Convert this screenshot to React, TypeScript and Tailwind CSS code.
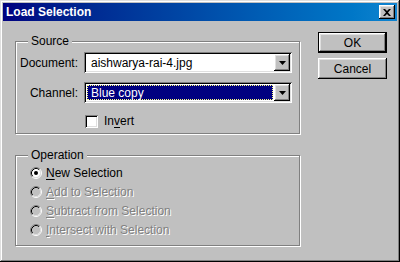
import React from 'react';

const font = { fontFamily: '"Liberation Sans", Arial, sans-serif' };

const raised =
  'shadow-[inset_-1px_-1px_0_#000,inset_1px_1px_0_#fff,inset_-2px_-2px_0_#808080,inset_2px_2px_0_#dfdfdf]';
const sunken =
  'shadow-[inset_1px_1px_0_#808080,inset_-1px_-1px_0_#fff,inset_2px_2px_0_#000,inset_-2px_-2px_0_#dfdfdf]';

const Arrow = () => (
  <svg width="7" height="4" viewBox="0 0 7 4">
    <path d="M0 0h7L3.5 4z" fill="#000" />
  </svg>
);

const Combo = ({ value, focused }: { value: string; focused?: boolean }) => (
  <div className={`w-[208px] h-[21px] bg-white flex items-stretch p-[2px] ${sunken}`}>
    <div className="flex-1 flex items-stretch p-[1px]">
      {focused ? (
        <div className="flex-1 bg-[#000080] text-white border border-dotted border-[#ffff80] flex items-center pl-[3px]">
          {value}
        </div>
      ) : (
        <div className="flex-1 flex items-center pl-[4px]">{value}</div>
      )}
    </div>
    <div className={`w-[16px] bg-[#c0c0c0] flex items-center justify-center ${raised}`}>
      <Arrow />
    </div>
  </div>
);

const Radio = ({ checked, disabled }: { checked?: boolean; disabled?: boolean }) => (
  <svg width="12" height="12" viewBox="0 0 12 12" className="shrink-0">
    <circle cx="6" cy="6" r="4.5" fill={disabled ? '#c0c0c0' : '#fff'} />
    <path d="M2.11 9.89A5.5 5.5 0 0 1 9.89 2.11" stroke="#808080" fill="none" />
    <path d="M9.89 2.11A5.5 5.5 0 0 1 2.11 9.89" stroke="#fff" fill="none" />
    <path d="M2.82 9.18A4.5 4.5 0 0 1 9.18 2.82" stroke="#000" fill="none" />
    <path d="M9.18 2.82A4.5 4.5 0 0 1 2.82 9.18" stroke="#dfdfdf" fill="none" />
    {checked && <circle cx="6" cy="6" r="2" fill="#000" />}
  </svg>
);

const Group = ({ title, className, children }: { title: string; className: string; children: React.ReactNode }) => (
  <div
    className={`relative border border-[#808080] shadow-[1px_1px_0_#fff,inset_1px_1px_0_#fff] ${className}`}
  >
    <span className="absolute left-[12px] top-[-8px] bg-[#c0c0c0] px-[3px] leading-[14px]">{title}</span>
    {children}
  </div>
);

const disabledText = 'text-[#808080] [text-shadow:1px_1px_0_#fff]';

export default function App() {
  const ops = [
    { key: 'N', rest: 'ew Selection', checked: true },
    { key: 'A', rest: 'dd to Selection' },
    { key: 'S', rest: 'ubtract from Selection' },
    { key: 'I', rest: 'ntersect with Selection' },
  ];

  return (
    <div
      style={font}
      className="w-[400px] h-[262px] bg-[#c0c0c0] p-[3px] text-[12px] text-black shadow-[inset_-1px_-1px_0_#000,inset_1px_1px_0_#dfdfdf,inset_-2px_-2px_0_#808080,inset_2px_2px_0_#fff]"
    >
      {/* title bar */}
      <div className="h-[18px] flex items-center justify-between pl-[3px] pr-[2px] bg-gradient-to-r from-[#000080] to-[#1084d0]">
        <span className="text-white font-bold text-[12px] leading-none">Load Selection</span>
        <button className={`w-[16px] h-[14px] bg-[#c0c0c0] flex items-center justify-center ${raised}`}>
          <svg width="8" height="7" viewBox="0 0 8 7">
            <path d="M0 0h2l2 2 2-2h2L5 3.5 8 7H6L4 5 2 7H0l3-3.5z" fill="#000" />
          </svg>
        </button>
      </div>

      <div className="flex pl-[12px]">
        <div className="w-[285px] flex flex-col">
          <Group title="Source" className="mt-[20px] h-[93px]">
            <div className="flex flex-col pt-[10px]">
              <div className="flex items-center h-[21px]">
                <span className="w-[68px] text-right pr-[6px]">Document:</span>
                <Combo value="aishwarya-rai-4.jpg" />
              </div>
              <div className="flex items-center h-[21px] mt-[9px]">
                <span className="w-[68px] text-right pr-[6px]">Channel:</span>
                <Combo value="Blue copy" focused />
              </div>
              <div className="flex items-center mt-[9px] pl-[69px]">
                <div className={`w-[13px] h-[13px] bg-white ${sunken}`} />
                <span className="ml-[6px]">
                  In<u className="underline-offset-2">v</u>ert
                </span>
              </div>
            </div>
          </Group>

          <Group title="Operation" className="mt-[21px] h-[91px]">
            <div className="flex flex-col pt-[11px] pl-[14px] gap-[7px]">
              {ops.map((o) => (
                <div key={o.key} className="flex items-center h-[12px]">
                  <Radio checked={o.checked} disabled={!o.checked} />
                  <span className={`ml-[4px] leading-[12px] ${o.checked ? '' : disabledText}`}>
                    <u className="underline-offset-2">{o.key}</u>
                    {o.rest}
                  </span>
                </div>
              ))}
            </div>
          </Group>
        </div>

        <div className="ml-[18px] pt-[11px] flex flex-col gap-[5px]">
          <button className={`w-[69px] h-[21px] bg-[#c0c0c0] border border-black ${raised}`}>OK</button>
          <button className={`w-[69px] h-[21px] bg-[#c0c0c0] ${raised}`}>Cancel</button>
        </div>
      </div>
    </div>
  );
}
